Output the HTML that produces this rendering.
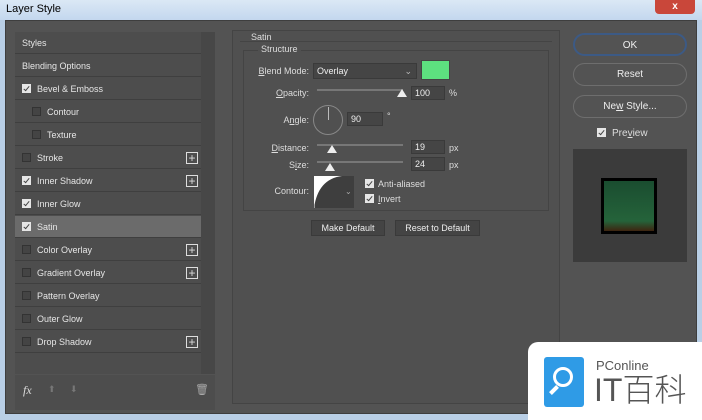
<!DOCTYPE html><html><head><style>
*{margin:0;padding:0;box-sizing:border-box}
body{width:702px;height:420px;overflow:hidden;background:#b9cfe6;font-family:"Liberation Sans",sans-serif;font-size:9px;color:#ddd;position:relative}
.abs{position:absolute}
#title{left:0;top:0;width:702px;height:20px;background:linear-gradient(#dbe8f5,#c3d7ee);color:#000;font-size:11px;padding:3px 0 0 6px}
#close{left:655px;top:0;width:40px;height:14px;background:#c9473a;border-radius:0 0 4px 4px;color:#fff;text-align:center;font-size:10px;font-weight:bold;line-height:13px}
#dlg{left:5px;top:20px;width:692px;height:394px;background:#535353;border:1px solid #3e3e3e}
#list{left:15px;top:32px;width:186px;height:342px;background:#4d4d4d}
#scroll{left:201px;top:32px;width:14px;height:342px;background:#474747}
.row{position:absolute;left:0;width:186px;height:22px;border-bottom:1px solid #3f3f3f;line-height:22px;padding-left:7px;color:#e6e6e6}
.sel{background:#6b6b6b}
.cb{display:inline-block;width:9px;height:9px;border:1px solid #333;background:#444;vertical-align:-1px;margin-right:6px}
.ck{background:#e6e6e6;border-color:#e6e6e6;position:relative}
.ck:after{content:"";position:absolute;left:2px;top:0px;width:2px;height:5px;border:solid #444;border-width:0 1.5px 1.5px 0;transform:rotate(40deg)}
.plus{position:absolute;right:3px;top:5px;width:12px;height:12px;border:1px solid #ddd;color:#ddd;text-align:center;line-height:10px;font-size:12px}
#bot{left:15px;top:375px;width:200px;height:35px;background:#4d4d4d}
#center{left:232px;top:30px;width:328px;height:374px;border:1px solid #444;background:#505050}
.grp{border:1px solid #444}
.lbl{position:absolute;text-align:right;width:70px;color:#ddd}
.inp{position:absolute;background:#454545;border:1px solid #3a3a3a;height:14px;line-height:12px;padding-left:3px;color:#eee}
.track{position:absolute;height:2px;background:#777}
.thumb{position:absolute;width:0;height:0;border-left:5px solid transparent;border-right:5px solid transparent;border-bottom:8px solid #eee}
.btn{position:absolute;background:#444;border:1px solid #3a3a3a;text-align:center;color:#eee;height:16px;line-height:14px}
.rb{position:absolute;left:573px;width:114px;height:23px;border:1px solid #6e6e6e;border-radius:12px;text-align:center;line-height:21px;color:#eee;font-size:10px}
</style></head><body>
<div id="title" class="abs">Layer Style</div>
<div id="close" class="abs">x</div>
<div id="dlg" class="abs"></div>
<div id="list" class="abs">
<div class="row" style="top:0">Styles</div>
<div class="row" style="top:23px">Blending Options</div>
<div class="row" style="top:46px"><span class="cb ck"></span>Bevel &amp; Emboss</div>
<div class="row" style="top:69px;padding-left:17px"><span class="cb"></span>Contour</div>
<div class="row" style="top:92px;padding-left:17px"><span class="cb"></span>Texture</div>
<div class="row" style="top:115px"><span class="cb"></span>Stroke<span class="plus">+</span></div>
<div class="row" style="top:138px"><span class="cb ck"></span>Inner Shadow<span class="plus">+</span></div>
<div class="row" style="top:161px"><span class="cb ck"></span>Inner Glow</div>
<div class="row sel" style="top:184px"><span class="cb ck"></span>Satin</div>
<div class="row" style="top:207px"><span class="cb"></span>Color Overlay<span class="plus">+</span></div>
<div class="row" style="top:230px"><span class="cb"></span>Gradient Overlay<span class="plus">+</span></div>
<div class="row" style="top:253px"><span class="cb"></span>Pattern Overlay</div>
<div class="row" style="top:276px"><span class="cb"></span>Outer Glow</div>
<div class="row" style="top:299px"><span class="cb"></span>Drop Shadow<span class="plus">+</span></div>
</div>
<div id="scroll" class="abs"></div>
<div id="bot" class="abs"><span class="abs" style="left:8px;top:8px;font-style:italic;font-size:12px;font-family:'Liberation Serif',serif">fx</span><span class="abs" style="left:33px;top:9px;color:#777">⬆</span><span class="abs" style="left:55px;top:9px;color:#777">⬇</span><span class="abs" style="left:180px;top:8px;color:#aaa;font-size:11px">🗑</span></div>
<div id="center" class="abs">
<div class="abs" style="left:18px;top:1px">Satin</div>
<div class="abs grp" style="left:7px;top:10px;width:312px;height:10px;border-width:1px 0 0 0"></div>
<div class="abs grp" style="left:10px;top:19px;width:306px;height:161px"></div>
<div class="abs" style="left:25px;top:13px;background:#505050;padding:0 3px">Structure</div>
<div class="lbl" style="left:6px;top:35px"><u>B</u>lend Mode:</div>
<div class="inp" style="left:80px;top:32px;width:104px;height:16px;line-height:14px">Overlay<span style="position:absolute;right:4px;color:#bbb">⌄</span></div>
<div class="abs" style="left:188px;top:29px;width:29px;height:20px;background:#5de07f;border:1px solid #444"></div>
<div class="lbl" style="left:6px;top:57px"><u>O</u>pacity:</div>
<div class="track" style="left:84px;top:58px;width:86px"></div><div class="thumb" style="left:164px;top:58px"></div>
<div class="inp" style="left:178px;top:55px;width:34px">100</div><div class="abs" style="left:216px;top:57px">%</div>
<div class="lbl" style="left:6px;top:84px">A<u>n</u>gle:</div>
<div class="abs" style="left:80px;top:74px;width:30px;height:30px;border:1px solid #888;border-radius:50%"></div>
<div class="abs" style="left:94.5px;top:76px;width:1px;height:13px;background:#bbb"></div>
<div class="inp" style="left:114px;top:81px;width:36px">90</div><div class="abs" style="left:154px;top:80px">°</div>
<div class="lbl" style="left:6px;top:112px"><u>D</u>istance:</div>
<div class="track" style="left:84px;top:113px;width:86px"></div><div class="thumb" style="left:94px;top:114px"></div>
<div class="inp" style="left:178px;top:109px;width:34px">19</div><div class="abs" style="left:216px;top:112px">px</div>
<div class="lbl" style="left:6px;top:129px">S<u>i</u>ze:</div>
<div class="track" style="left:84px;top:130px;width:86px"></div><div class="thumb" style="left:92px;top:132px"></div>
<div class="inp" style="left:178px;top:126px;width:34px">24</div><div class="abs" style="left:216px;top:129px">px</div>
<div class="lbl" style="left:6px;top:155px">Contour:</div>
<svg class="abs" style="left:81px;top:145px" width="40" height="32"><rect width="40" height="32" fill="#3e3e3e"/><path d="M0 0 L28 0 Q4 3 0 32Z" fill="#fff"/><path d="M0 32 L0 0" stroke="#fff"/><text x="31" y="18" fill="#aaa" font-size="8">⌄</text></svg>
<div class="abs" style="left:132px;top:148px"><span class="cb ck" style="margin-right:4px"></span>Anti-aliased</div>
<div class="abs" style="left:132px;top:163px"><span class="cb ck" style="margin-right:4px"></span><u>I</u>nvert</div>
<div class="btn" style="left:78px;top:189px;width:74px">Make Default</div>
<div class="btn" style="left:162px;top:189px;width:85px">Reset to Default</div>
</div>
<div class="rb" style="top:33px;border-color:#3c5a85;border-width:2px">OK</div>
<div class="rb" style="top:63px">Reset</div>
<div class="rb" style="top:95px">Ne<u>w</u> Style...</div>
<div class="abs" style="left:597px;top:128px;font-size:10px"><span class="cb ck"></span>Pre<u>v</u>iew</div>
<div class="abs" style="left:573px;top:149px;width:114px;height:113px;background:#3b3b3b"></div>
<div class="abs" style="left:601px;top:178px;width:56px;height:56px;background:#000;padding:3px"><div style="width:100%;height:100%;background:linear-gradient(#1a4d30,#25633a 80%,#3e2410)"></div></div>
<div class="abs" style="left:528px;top:342px;width:174px;height:78px;background:#fff;border-radius:10px 0 0 0"></div>
<div class="abs" style="left:544px;top:357px;width:40px;height:50px;background:#2f9be6;border-radius:3px"></div>
<div class="abs" style="left:553px;top:367px;width:20px;height:20px;border:3px solid #fff;border-radius:50%"></div>
<div class="abs" style="left:549px;top:388px;width:10px;height:4px;background:#fff;transform:rotate(-45deg)"></div>
<div class="abs" style="left:596px;top:358px;color:#555;font-size:13px">PConline</div>
<div class="abs" style="left:594px;top:372px;color:#555;font-size:32px;line-height:36px;font-family:'Liberation Sans','Noto Sans CJK SC',sans-serif;font-weight:300">IT百科</div>
</body></html>
